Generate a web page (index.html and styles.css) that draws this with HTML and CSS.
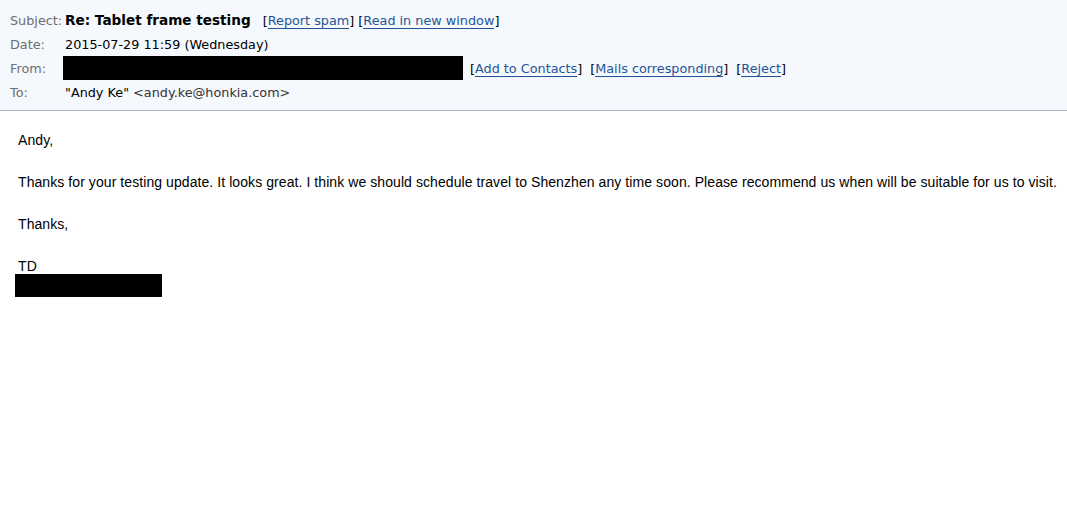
FILE: index.html
```html
<!DOCTYPE html>
<html>
<head>
<meta charset="utf-8">
<link rel="stylesheet" href="styles.css">
</head>
<body>
<div class="head">
  <div class="row">
    <span class="label">Subject:</span>
    <span class="subject">Re: Tablet frame testing</span>
    <span class="links">[<a href="#">Report spam</a>] [<a href="#">Read in new window</a>]</span>
  </div>
  <div class="row">
    <span class="label">Date:</span>
    <span class="value">2015-07-29 11:59 (Wednesday)</span>
  </div>
  <div class="row">
    <span class="label">From:</span>
    <span class="redact from-redact"></span>
    <span class="links from-links">[<a href="#">Add to Contacts</a>]<span class="sp"></span>[<a href="#">Mails corresponding</a>]<span class="sp"></span>[<a href="#">Reject</a>]</span>
  </div>
  <div class="row">
    <span class="label">To:</span>
    <span class="value">"Andy Ke" <span class="addr">&lt;andy.ke@honkia.com&gt;</span></span>
  </div>
</div>
<div class="body">
  <p>Andy,</p>
  <p>Thanks for your testing update. It looks great. I think we should schedule travel to Shenzhen any time soon. Please recommend us when will be suitable for us to visit.</p>
  <p>Thanks,</p>
  <p class="sig">TD</p>
  <div class="redact sig-redact"></div>
</div>
</body>
</html>
```
FILE: styles.css
```css
html, body { margin: 0; padding: 0; background: #fff; }
.head {
  background: #f5f8fc;
  border-bottom: 1px solid #a3b5c7;
  padding: 8px 0 6px 10px;
  font-family: "DejaVu Sans", Verdana, sans-serif;
  font-size: 12.8px;
  color: #000;
}
.row { display: flex; align-items: center; height: 24px; white-space: nowrap; }
.label { width: 55px; color: #6e6e6e; flex: none; }
.subject { font-weight: bold; font-size: 13.6px; margin-right: 12px; }
.links a { color: #1f5596; text-decoration: none; border-bottom: 1px solid #1f5596; }
.links { color: #000; }
.sp { display: inline-block; width: 8px; }
.addr { color: #333; }
.redact { background: #000; display: block; }
.from-redact { width: 400px; height: 24px; margin-left: -2px; margin-right: 7px; flex: none; }
.body {
  padding: 21px 0 0 18px;
  font-family: "Liberation Sans", Arial, sans-serif;
  font-size: 14px;
  letter-spacing: 0.075px;
  color: #000;
}
.body p { margin: 0 0 26px 0; line-height: 16px; }
.body p.sig { margin-bottom: 0; }
.sig-redact { width: 147px; height: 23px; margin-left: -3px; }
```
